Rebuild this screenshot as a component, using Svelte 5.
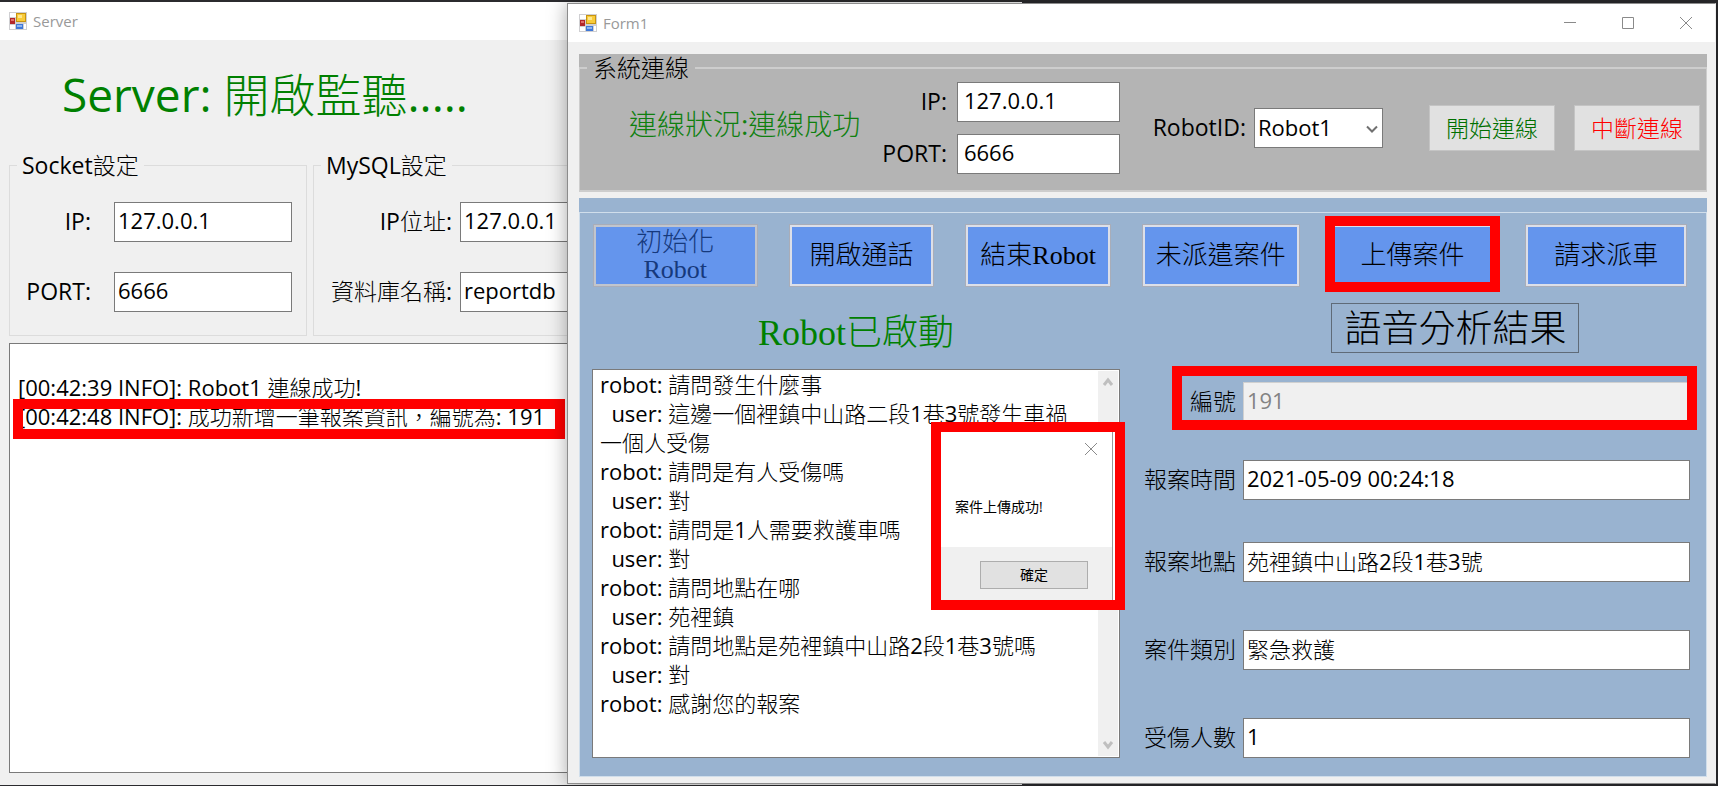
<script>
  const logText = '\n[00:42:39 INFO]: Robot1 連線成功!\n[00:42:48 INFO]: 成功新增一筆報案資訊，編號為: 191';

  const transcript = [
    'robot: 請問發生什麼事',
    '  user: 這邊一個裡鎮中山路二段1巷3號發生車禍一個人受傷',
    'robot: 請問是有人受傷嗎',
    '  user: 對',
    'robot: 請問是1人需要救護車嗎',
    '  user: 對',
    'robot: 請問地點在哪',
    '  user: 苑裡鎮',
    'robot: 請問地點是苑裡鎮中山路2段1巷3號嗎',
    '  user: 對',
    'robot: 感謝您的報案'
  ].join('\n');

  const actions = [
    { label: '初始化 Robot', grow: 165, disabled: true },
    { label: '開啟通話', grow: 146 },
    { label: '結束Robot', grow: 146 },
    { label: '未派遣案件', grow: 158 },
    { label: '上傳案件', grow: 164, marked: true },
    { label: '請求派車', grow: 162 }
  ];

  const fields = [
    { id: 'case-no', label: '編號', value: '191', disabled: true, marked: true },
    { id: 'case-time', label: '報案時間', value: '2021-05-09 00:24:18' },
    { id: 'case-place', label: '報案地點', value: '苑裡鎮中山路2段1巷3號' },
    { id: 'case-type', label: '案件類別', value: '緊急救護' },
    { id: 'case-injured', label: '受傷人數', value: '1' }
  ];
</script>

{#snippet appIcon()}
  <svg class="app-icon" width="18" height="18" viewBox="0 0 18 18" aria-hidden="true">
    <rect width="18" height="18" fill="#cfcfd2" />
    <rect x="1" y="1" width="6" height="4" fill="#fff" />
    <rect x="1" y="13" width="5" height="4" fill="#fff" />
    <rect x="15" y="12" width="2" height="5" fill="#fff" />
    <rect x="1" y="6" width="5" height="6" fill="#b3262a" />
    <rect x="2" y="7" width="3" height="2" fill="#e0706c" />
    <rect x="7" y="1" width="10" height="9" fill="#c8940f" />
    <rect x="8" y="2" width="8" height="7" fill="#f8cb3a" />
    <rect x="9" y="3" width="4" height="3" fill="#fde68c" />
    <rect x="7" y="12" width="7" height="5" fill="#3f78d8" />
    <rect x="8" y="13" width="5" height="2" fill="#8db4f2" />
  </svg>
{/snippet}

<main class="desktop">
  <section class="window server" aria-label="Server">
    <header class="titlebar">{@render appIcon()}<span>Server</span></header>
    <div class="server-body">
      <h1>Server: 開啟監聽.....</h1>
      <div class="settings">
        <fieldset class="group socket">
          <legend>Socket設定</legend>
          <div class="pairs">
            <label for="s-ip">IP:</label><input id="s-ip" value="127.0.0.1" />
            <label for="s-port">PORT:</label><input id="s-port" value="6666" />
          </div>
        </fieldset>
        <fieldset class="group mysql">
          <legend>MySQL設定</legend>
          <div class="pairs">
            <label for="m-ip">IP位址:</label><input id="m-ip" value="127.0.0.1" />
            <label for="m-db">資料庫名稱:</label><input id="m-db" value="reportdb" />
          </div>
        </fieldset>
      </div>
      <div class="log">
        <textarea aria-label="Log" readonly value={logText}></textarea>
        <div class="marker log-marker"></div>
      </div>
    </div>
  </section>

  <section class="window form" aria-label="Form1">
    <header class="titlebar">
      {@render appIcon()}<span>Form1</span>
      <div class="controls">
        <button aria-label="Minimize"><svg width="14" height="14" viewBox="0 0 14 14"><path d="M1 6.5h12" /></svg></button>
        <button aria-label="Maximize"><svg width="14" height="14" viewBox="0 0 14 14"><path d="M1.5 1.5h11v11h-11z" /></svg></button>
        <button aria-label="Close"><svg width="14" height="14" viewBox="0 0 14 14"><path d="M1 1l12 12M13 1L1 13" /></svg></button>
      </div>
    </header>

    <div class="panel connection">
      <fieldset>
        <legend>系統連線</legend>
        <div class="connection-row">
          <output class="status">連線狀況:連線成功</output>
          <div class="address">
            <label for="f-ip">IP:</label><input id="f-ip" value="127.0.0.1" />
            <label for="f-port">PORT:</label><input id="f-port" value="6666" />
          </div>
          <div class="robot">
            <label for="robot-id">RobotID:</label>
            <div class="combo">
              <select id="robot-id"><option>Robot1</option></select>
              <svg width="12" height="8" viewBox="0 0 12 8" aria-hidden="true"><path d="M1 1.5l5 5 5-5" /></svg>
            </div>
          </div>
          <div class="link-buttons">
            <button class="start">開始連線</button>
            <button class="stop">中斷連線</button>
          </div>
        </div>
      </fieldset>
    </div>

    <div class="panel work">
      <fieldset aria-label="Robot">
        <div class="actions">
          {#each actions as a}
            <div class="action" style="flex-grow: {a.grow}">
              <button disabled={a.disabled}>{a.label}</button>
              {#if a.marked}<div class="marker action-marker"></div>{/if}
            </div>
          {/each}
        </div>
        <div class="columns">
          <div class="talk">
            <h2>Robot已啟動</h2>
            <div class="transcript">
              <textarea aria-label="對話" readonly value={transcript}></textarea>
              <div class="scroll" aria-hidden="true">
                <svg width="12" height="10" viewBox="0 0 12 10"><path d="M2 8l4-5 4 5" /></svg>
                <svg width="12" height="10" viewBox="0 0 12 10"><path d="M2 2l4 5 4-5" /></svg>
              </div>
              <div class="dialog" role="dialog" aria-label="案件上傳成功!">
                <div class="dialog-main">
                  <button class="dialog-close" aria-label="Close"><svg width="14" height="14" viewBox="0 0 14 14"><path d="M1 1l12 12M13 1L1 13" /></svg></button>
                  <p>案件上傳成功!</p>
                </div>
                <div class="dialog-foot"><button>確定</button></div>
              </div>
            </div>
          </div>
          <div class="result">
            <h3>語音分析結果</h3>
            <div class="fields">
              {#each fields as f}
                <div class="field">
                  <label for={f.id}>{f.label}</label>
                  <input id={f.id} value={f.value} disabled={f.disabled} />
                  {#if f.marked}<div class="marker field-marker"></div>{/if}
                </div>
              {/each}
            </div>
          </div>
        </div>
      </fieldset>
    </div>
  </section>
</main>

<style>
  :global(body) { margin: 0; }

  .desktop, .desktop * { box-sizing: border-box; }

  .desktop {
    position: relative;
    min-height: 100vh;
    overflow: hidden;
    background: #2b2b2e;
    color: #000;
    font-family: "Open Sans", "Noto Sans CJK TC Light", "Noto Sans CJK TC", sans-serif;
    font-size: 22px;
    font-weight: 400;
  }

  button, input, select, textarea { font: inherit; color: inherit; margin: 0; }
  button { cursor: pointer; }
  fieldset { margin: 0; padding: 0; min-width: 0; }
  h1, h2, h3, p { margin: 0; font-weight: inherit; }

  .window {
    position: absolute;
    display: flex;
    flex-direction: column;
    background: #f0f0f0;
  }
  .server { inset: 2px 40.5% 1px 0; }
  .form {
    inset: 3px 2px 2px 33%;
    border: 1px solid #8c8c8c;
    border-right-color: #f0f0f0;
    box-shadow: 0 0 18px rgba(0, 0, 0, 0.35);
    padding: 0 8px 8px 11px;
  }

  .titlebar {
    display: flex;
    align-items: center;
    gap: 6px;
    height: 38px;
    flex: none;
    padding-left: 9px;
    background: #fff;
    color: #999;
    font-size: 15px;
  }
  .form .titlebar { margin: 0 -8px 12px -11px; padding-left: 11px; }
  .controls { display: flex; gap: 44px; margin-left: auto; padding-right: 22px; }
  .controls button, .dialog-close { display: flex; padding: 0; border: 0; background: none; }
  .controls path, .dialog-close path { fill: none; stroke: #8a8a8a; stroke-width: 1; }

  .marker { position: absolute; border: 10px solid #f00; pointer-events: none; }

  input {
    width: 100%;
    min-width: 0;
    height: 40px;
    padding: 0 3px 5px;
    border: 1px solid #7a7a7a;
    border-radius: 0;
    background: #fff;
  }
  label { font-size: 23px; line-height: 38px; white-space: nowrap; }
  textarea {
    display: block;
    width: 100%;
    height: 100%;
    border: 1px solid #7a7a7a;
    border-radius: 0;
    outline: 0;
    resize: none;
    overflow: hidden;
    line-height: 29px;
    background: #fff;
  }

  .server-body {
    flex: 1;
    display: flex;
    flex-direction: column;
    padding: 0 9px 12px;
  }
  h1 { padding-left: 53px; font-size: 46px; line-height: 109px; color: #008000; }
  .settings { display: grid; grid-template-columns: 298px 1fr; gap: 6px; }
  .group { border: 1px solid #dcdcdc; }
  .group legend { margin-left: 7px; padding: 0 5px; font-size: 23px; line-height: 32px; }
  .pairs {
    display: grid;
    grid-template-columns: 104px 1fr;
    row-gap: 30px;
    padding: 21px 14px 23px 0;
    text-align: right;
  }
  .socket label { padding-right: 23px; }
  .mysql .pairs { grid-template-columns: 146px 1fr; }
  .mysql label { padding-right: 8px; }
  .log { position: relative; flex: 1; margin-top: 7px; }
  .log textarea { padding: 0 8px; }
  .log-marker { top: 56px; left: 4px; width: 552px; height: 40px; }

  .panel.connection { background: #b4b4b4; margin-bottom: 6px; }
  .connection fieldset { border: 2px solid #cdcdcd; border-width: 2px 1px; }
  .connection legend {
    margin-left: 7px;
    padding: 0 6px;
    font-size: 24px;
    line-height: 28px;
  }
  .connection-row {
    display: grid;
    grid-template-columns: 301fr 239fr 263fr 323fr;
    align-items: center;
    padding-bottom: 16px;
  }
  .status { padding: 0 0 8px 49px; font-size: 28px; line-height: 32px; color: #0f800f; white-space: nowrap; }
  .address {
    display: grid;
    grid-template-columns: auto 163px;
    gap: 12px 10px;
    justify-content: end;
    text-align: right;
  }
  .address input { padding-left: 6px; }
  .robot { display: flex; justify-content: flex-end; gap: 8px; }
  .combo { position: relative; width: 129px; }
  .combo svg { position: absolute; right: 5px; top: 17px; pointer-events: none; }
  .combo path { fill: none; stroke: #707070; stroke-width: 2; }
  select {
    appearance: none;
    width: 100%;
    height: 40px;
    padding: 0 3px 3px;
    border: 1px solid #7a7a7a;
    border-radius: 0;
    background: #fff;
  }
  .link-buttons { display: flex; justify-content: flex-end; gap: 19px; padding-right: 6px; }
  .link-buttons button {
    width: 126px;
    height: 46px;
    padding: 0 0 3px;
    border: 1px solid #c4c4c4;
    background: #e1e1e1;
    font-size: 23px;
    white-space: nowrap;
  }
  .link-buttons .start { color: #007000; }
  .link-buttons .stop { color: #f00; }

  .panel.work {
    flex: 1;
    display: flex;
    flex-direction: column;
    padding-top: 14px;
    background: #99b3d0;
  }
  .work fieldset {
    flex: 1;
    display: flex;
    flex-direction: column;
    border: 1px solid #d0deeb;
    padding: 11px 0 18px;
  }
  .actions { display: flex; gap: 31px; padding: 0 19px 0 13px; }
  .action { position: relative; flex-basis: 0; min-width: 0; }
  .action button {
    width: 100%;
    height: 63px;
    padding: 0 16px;
    border: 3px solid #dcdfe8;
    outline: 1px solid #a9adb8;
    outline-offset: -1px;
    background: #6495ed;
    font-family: "Liberation Serif", "Noto Sans CJK TC Light", "Noto Sans CJK TC", serif;
    font-size: 26px;
    line-height: 27px;
    white-space: nowrap;
    display: flex;
    align-items: center;
    justify-content: center;
  }
  .action button:disabled { border-color: #c1c5cd; color: #16397c; padding: 0 36px; white-space: normal; }
  .action-marker { inset: -8px -6px -5px; }

  .columns {
    flex: 1;
    display: grid;
    grid-template-columns: 528fr 547fr;
    gap: 23px;
    padding: 0 16px 0 12px;
  }
  .talk { display: flex; flex-direction: column; }
  h2 {
    padding-top: 11px;
    font-family: "Liberation Serif", "Noto Sans CJK TC Light", "Noto Sans CJK TC", serif;
    font-size: 36px;
    line-height: 71px;
    text-align: center;
    color: #008000;
  }
  .transcript { position: relative; flex: 1; }
  .transcript textarea { padding: 0 32px 0 7px; }
  .scroll {
    position: absolute;
    inset: 2px 2px 2px auto;
    width: 20px;
    display: flex;
    flex-direction: column;
    align-items: center;
    justify-content: space-between;
    padding: 6px 0;
    background: #f0f0f0;
  }
  .scroll path { fill: none; stroke: #bfbfbf; stroke-width: 3; }

  .dialog {
    position: absolute;
    top: 53px;
    right: -5px;
    width: 194px;
    height: 188px;
    display: flex;
    flex-direction: column;
    border: 10px solid #f00;
    background: #fff;
    font-size: 14px;
    font-family: "Open Sans", "Noto Sans CJK TC", sans-serif;
  }
  .dialog-main { flex: 1; margin-right: 2px; border-right: 1px solid #999; padding: 10px 14px; }
  .dialog-close { margin-left: auto; }
  .dialog p { padding-top: 39px; line-height: 24px; }
  .dialog-foot {
    margin-right: 2px;
    border-right: 1px solid #999;
    padding: 14px 24px 11px 39px;
    background: #f0f0f0;
  }
  .dialog-foot button {
    display: block;
    width: 100%;
    height: 28px;
    padding: 0 0 2px;
    border: 1px solid #adadad;
    background: #e1e1e1;
  }

  .result { display: flex; flex-direction: column; }
  h3 {
    align-self: center;
    margin: 16px 0 29px 78px;
    padding: 0 12px;
    border: 1px solid #5f6b78;
    font-size: 37px;
    line-height: 48px;
  }
  .fields {
    flex: 1;
    display: grid;
    grid-template-rows: minmax(0, 78fr) minmax(0, 82fr) minmax(0, 88fr) minmax(0, 88fr) minmax(0, 40fr);
  }
  .field {
    position: relative;
    align-self: start;
    display: grid;
    grid-template-columns: 93px 1fr;
    gap: 7px;
    text-align: right;
  }
  .field input:disabled { background: #f0f0f0; border-color: #d0d0d0; color: #838383; }
  .field-marker { inset: -16px -7px -8px 29px; }
</style>
